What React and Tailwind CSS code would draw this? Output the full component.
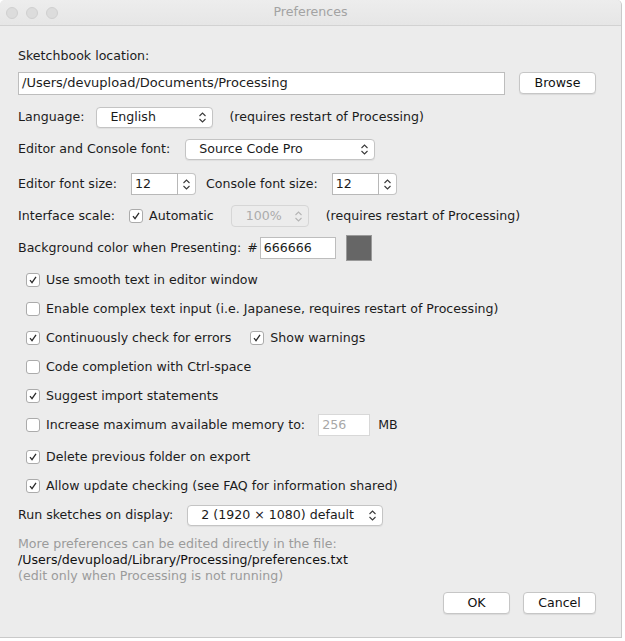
import React from 'react';

const font = { fontFamily: '"DejaVu Sans", "Liberation Sans", sans-serif' };

function Chevrons({ muted }) {
  return (
    <svg width="9" height="13" viewBox="0 0 9 13" fill="none" stroke={muted ? '#b5b5b5' : '#3a3a3a'} strokeWidth="1.1">
      <path d="M1.5 5 L4.5 2 L7.5 5" />
      <path d="M1.5 8 L4.5 11 L7.5 8" />
    </svg>
  );
}

function Select({ className, children }) {
  return (
    <div className={`h-[21px] bg-white border border-[#c4c4c4] rounded-[4px] shadow-[0_1px_1px_rgba(0,0,0,0.06)] flex items-center justify-between pl-[13px] pr-[5px] ${className}`}>
      <span className="text-[#1a1a1a]">{children}</span>
      <Chevrons />
    </div>
  );
}

function Spinner({ value, className }) {
  return (
    <div className={`flex h-[22px] ${className}`}>
      <div className="w-[47px] bg-white border border-[#b8b8b8] flex items-center pl-[3px]">{value}</div>
      <div className="w-[18px] bg-white border border-l-0 border-[#c4c4c4] rounded-r-[4px] flex items-center justify-center">
        <Chevrons />
      </div>
    </div>
  );
}

function Checkbox({ checked, className = '' }) {
  return (
    <div className={`w-[14px] h-[14px] bg-white border border-[#ababab] rounded-[3px] flex items-center justify-center shrink-0 ${className}`}>
      {checked && (
        <svg width="10" height="10" viewBox="0 0 10 10" fill="none" stroke="#2b2b2b" strokeWidth="1.3">
          <path d="M2 5.2 L4 7.6 L8 1.8" />
        </svg>
      )}
    </div>
  );
}

function CheckRow({ checked, label, className, children }) {
  return (
    <div className={`h-[24px] flex items-center pl-[26px] ${className}`}>
      <Checkbox checked={checked} />
      <span className="ml-[6px]">{label}</span>
      {children}
    </div>
  );
}

function Button({ children, className }) {
  return (
    <div className={`h-[22px] bg-white border border-[#c6c6c6] rounded-[4px] shadow-[0_1px_1px_rgba(0,0,0,0.08)] flex items-center justify-center text-[#111] ${className}`}>
      {children}
    </div>
  );
}

export default function App() {
  return (
    <div className="w-[625px] h-[641px] bg-white overflow-hidden text-[12.6px] text-[#1c1c1c]" style={font}>
      <div className="w-[622px] h-[638px] bg-[#ececec] border-r border-b border-[#c9c9c9] rounded-t-[5px] flex flex-col">
        {/* title bar */}
        <div className="h-[26px] shrink-0 bg-gradient-to-b from-[#ededed] to-[#e6e6e6] border-b border-[#d2d2d2] rounded-t-[5px] flex items-center">
          <div className="flex gap-[8px] pl-[6px]">
            <div className="w-[12px] h-[12px] rounded-full bg-[#dcdcdc] border border-[#d0d0d0]" />
            <div className="w-[12px] h-[12px] rounded-full bg-[#dcdcdc] border border-[#d0d0d0]" />
            <div className="w-[12px] h-[12px] rounded-full bg-[#dcdcdc] border border-[#d0d0d0]" />
          </div>
          <div className="flex-1 text-center text-[#a3a3a3] text-[12.6px] pr-[58px]">Preferences</div>
        </div>

        <div className="flex flex-col pl-[18px]">
          <div className="h-[24px] mt-[18px] flex items-center">Sketchbook location:</div>

          <div className="h-[24px] mt-[3px] flex items-center">
            <div className="w-[487px] h-[23px] bg-white border border-[#bdbdbd] flex items-center pl-[3px] text-[13px]">
              /Users/devupload/Documents/Processing
            </div>
            <Button className="ml-[14px] w-[77px] h-[21px]">Browse</Button>
          </div>

          <div className="h-[24px] mt-[10px] flex items-center">
            <span>Language:</span>
            <Select className="ml-[12px] w-[117px]">English</Select>
            <span className="ml-[16px]">(requires restart of Processing)</span>
          </div>

          <div className="h-[24px] mt-[8px] flex items-center">
            <span>Editor and Console font:</span>
            <Select className="ml-[15px] w-[190px] h-[20px]">Source Code Pro</Select>
          </div>

          <div className="h-[24px] mt-[11px] flex items-center">
            <span>Editor font size:</span>
            <Spinner value="12" className="ml-[14px]" />
            <span className="ml-[10px]">Console font size:</span>
            <Spinner value="12" className="ml-[14px]" />
          </div>

          <div className="h-[24px] mt-[8px] flex items-center">
            <span>Interface scale:</span>
            <Checkbox checked className="ml-[14px]" />
            <span className="ml-[6px]">Automatic</span>
            <div className="ml-[17px] w-[78px] h-[22px] border border-[#d6d6d6] rounded-[4px] flex items-center justify-between pl-[14px] pr-[5px] text-[#ababab]">
              <span>100%</span>
              <Chevrons muted />
            </div>
            <span className="ml-[17px]">(requires restart of Processing)</span>
          </div>

          <div className="h-[26px] mt-[7px] flex items-center">
            <span>Background color when Presenting:</span>
            <span className="ml-[6px]">#</span>
            <div className="ml-[2px] w-[76px] h-[22px] bg-white border border-[#bdbdbd] flex items-center pl-[3px]">666666</div>
            <div className="ml-[10px] w-[26px] h-[26px] bg-[#666666] border border-[#9a9a9a]" />
          </div>
        </div>

        <div className="flex flex-col">
          <CheckRow checked label="Use smooth text in editor window" className="mt-[7px]" />
          <CheckRow label="Enable complex text input (i.e. Japanese, requires restart of Processing)" className="mt-[5px]" />
          <CheckRow checked label="Continuously check for errors" className="mt-[5px]">
            <Checkbox checked className="ml-[19px]" />
            <span className="ml-[6px]">Show warnings</span>
          </CheckRow>
          <CheckRow label="Code completion with Ctrl-space" className="mt-[5px]" />
          <CheckRow checked label="Suggest import statements" className="mt-[5px]" />
          <CheckRow label="Increase maximum available memory to:" className="mt-[5px]">
            <div className="ml-[13px] w-[52px] h-[22px] bg-white border border-[#d8d8d8] flex items-center pl-[3px] text-[#a8a8a8]">256</div>
            <span className="ml-[8px]">MB</span>
          </CheckRow>
          <CheckRow checked label="Delete previous folder on export" className="mt-[8px]" />
          <CheckRow checked label="Allow update checking (see FAQ for information shared)" className="mt-[5px]" />
        </div>

        <div className="flex flex-col pl-[18px]">
          <div className="h-[24px] mt-[5px] flex items-center">
            <span>Run sketches on display:</span>
            <Select className="ml-[14px] w-[196px] h-[20px]">2 (1920 × 1080) default</Select>
          </div>

          <div className="mt-[9px] leading-[16px]">
            <div className="text-[#9b9b9b]">More preferences can be edited directly in the file:</div>
            <div className="text-[#111]">/Users/devupload/Library/Processing/preferences.txt</div>
            <div className="text-[#9b9b9b]">(edit only when Processing is not running)</div>
          </div>

          <div className="mt-[8px] flex justify-end pr-[25px] gap-[13px]">
            <Button className="w-[67px]">OK</Button>
            <Button className="w-[73px]">Cancel</Button>
          </div>
        </div>
      </div>
    </div>
  );
}
